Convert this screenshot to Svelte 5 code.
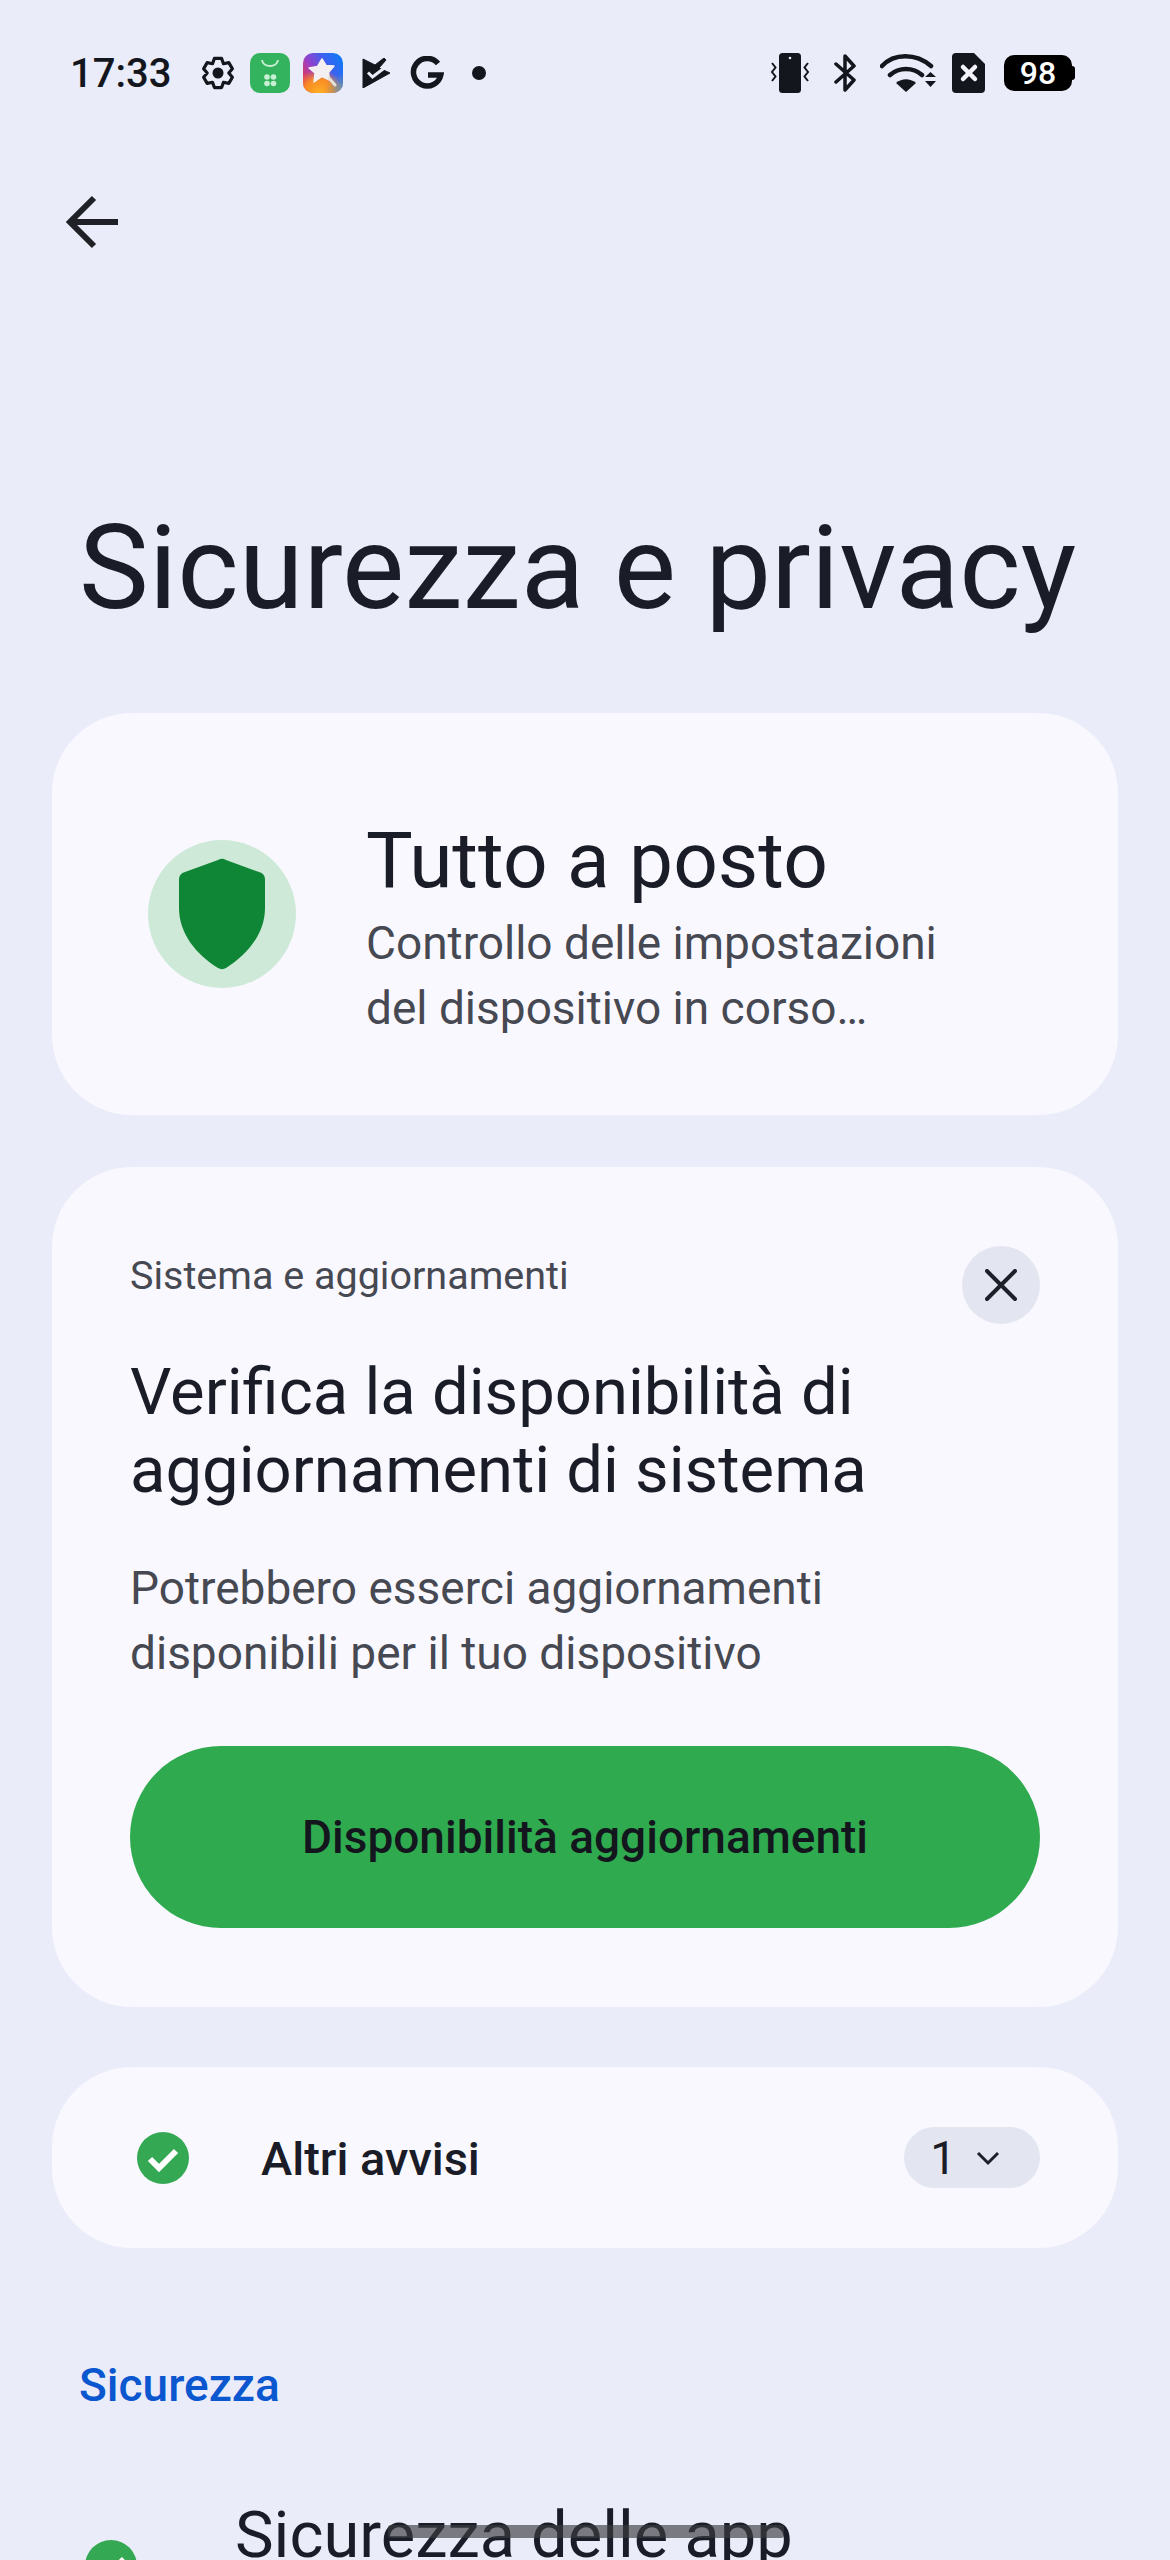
<script>
	const lines = ['Potrebbero esserci aggiornamenti', 'disponibili per il tuo dispositivo'];

	// six rounded teeth round the settings icon
	function gearPath() {
		let d = '';
		for (let i = 0; i < 6; i++) {
			const a = (i * Math.PI) / 3 - Math.PI / 2;
			const pts = [
				[10.8, a - 0.52],
				[15, a - 0.24],
				[15, a + 0.24],
				[10.8, a + 0.52]
			];
			for (const [r, t] of pts) {
				d += (d ? 'L' : 'M') + (17 + r * Math.cos(t)).toFixed(1) + ' ' + (17 + r * Math.sin(t)).toFixed(1);
			}
		}
		return d + 'Z';
	}
</script>

<div class="page">
	<div class="status">
		<span class="time">17:33</span>
		<div class="left-icons">
			<svg class="gear" width="34" height="34" viewBox="0 0 34 34">
				<path d={gearPath()} fill="none" stroke="#14161e" stroke-width="3.2" stroke-linejoin="round" />
				<circle cx="17" cy="17" r="5.5" fill="#14161e" />
			</svg>
			<svg class="store" width="40" height="40" viewBox="0 0 40 40">
				<rect width="40" height="40" rx="10" fill="#33b35d" />
				<path d="M12 7c1 8 15 8 16 0" fill="none" stroke="#c9f0d4" stroke-width="2" />
				<g fill="#c9f0d4">
					<circle cx="17" cy="24" r="2.800" />
					<circle cx="23.500" cy="24" r="2.800" />
					<circle cx="17" cy="30.500" r="2.800" />
					<circle cx="23.500" cy="30.500" r="2.800" />
				</g>
			</svg>
			<svg class="star" width="40" height="40" viewBox="0 0 40 40">
				<defs>
					<linearGradient id="star-bg" x1="0" y1="0.7" x2="1" y2="0.1">
						<stop offset="0" stop-color="#e83a4a" />
						<stop offset="0.3" stop-color="#9a3fc8" />
						<stop offset="0.65" stop-color="#3a62f0" />
						<stop offset="1" stop-color="#0a7cf8" />
					</linearGradient>
					<radialGradient id="star-warm" cx="0.4" cy="1" r="0.6">
						<stop offset="0" stop-color="#fbb024" />
						<stop offset="0.6" stop-color="#f98a26" />
						<stop offset="1" stop-color="#f98a26" stop-opacity="0" />
					</radialGradient>
					<radialGradient id="star-cool" cx="1" cy="0.95" r="0.45">
						<stop offset="0" stop-color="#7f9e92" />
						<stop offset="1" stop-color="#7f9e92" stop-opacity="0" />
					</radialGradient>
				</defs>
				<rect width="40" height="40" rx="10" fill="url(#star-bg)" />
				<rect width="40" height="40" rx="10" fill="url(#star-warm)" />
				<rect width="40" height="40" rx="10" fill="url(#star-cool)" />
				<path d="M19 6 23 12.500 31 13 25.500 19.500 26.500 27 19 23.500 11 29 12 20 6 15 14.500 13.500z" fill="#f4f0f2" stroke="#f4f0f2" stroke-width="1.500" stroke-linejoin="round" />
				<path d="M26 25l6 7" stroke="#e4e2da" stroke-width="3" stroke-linecap="round" />
			</svg>
			<svg class="tick" width="28" height="30" viewBox="0 0 28 30">
				<path d="M1 1 13 7 22 0 24 2 17 10 28 15 1 30z" fill="#14161e" stroke="#14161e" stroke-width="1" stroke-linejoin="round" />
				<path d="M6 14.500 10.500 19 23 9.500" fill="none" stroke="#eaecf9" stroke-width="3" />
			</svg>
			<svg class="g" width="34" height="34" viewBox="0 0 34 34">
				<path d="M28 7.500A13.800 13.800 0 1 0 30.800 19H18" fill="none" stroke="#14161e" stroke-width="5.500" />
			</svg>
			<span class="dot"></span>
		</div>
		<div class="right-icons">
			<svg width="40" height="40" viewBox="0 0 40 40">
				<rect x="9" y="0" width="22" height="40" rx="3.500" fill="#14161e" />
				<circle cx="20" cy="5" r="1.300" fill="#eaecf9" />
				<path d="M2 10l3.500 4.500L2 19l3.500 4.500L2 28M38 10l-3.500 4.500L38 19l-3.500 4.500L38 28" fill="none" stroke="#14161e" stroke-width="2" />
			</svg>
			<svg width="22" height="40" viewBox="0 0 22 40">
				<path d="M2 11 20 27 11 37V3l9 10L2 29" fill="none" stroke="#14161e" stroke-width="3.500" stroke-linejoin="round" stroke-linecap="round" />
			</svg>
			<svg class="wifi" width="56" height="40" viewBox="0 0 56 40">
				<path d="M2 13C14 0 36 0 51 13M10 22c9-8 23-8 32 0" fill="none" stroke="#14161e" stroke-width="4.500" stroke-linecap="round" />
				<path d="M16 30c6-5 14-5 20 0l-10 9z" fill="#14161e" />
				<path d="M45 24l5.500-5 5.500 5zM45 28h11l-5.500 6z" fill="#14161e" />
			</svg>
			<svg class="sim" width="33" height="40" viewBox="0 0 33 40">
				<path d="M4 0H22L33 11V36a4 4 0 0 1-4 4H4a4 4 0 0 1-4-4V4a4 4 0 0 1 4-4z" fill="#14161e" />
				<path d="M11 14 23 26M23 14 11 26" stroke="#f4f5fc" stroke-width="4.500" stroke-linecap="round" />
			</svg>
			<div class="battery"><span>98</span></div>
		</div>
	</div>

	<button class="back" aria-label="Indietro">
		<svg width="54" height="54" viewBox="0 0 54 54">
			<path d="M52 27H5M28 3 4 27l24 24" fill="none" stroke="#1f2127" stroke-width="6" />
		</svg>
	</button>

	<h1>Sicurezza e privacy</h1>

	<section class="card summary">
		<div class="shield-wrap">
			<svg width="88" height="112" viewBox="0 0 88 112">
				<path d="M40 2a8 8 0 0 1 8 0L81 14a8 8 0 0 1 6 8V50c0 26-18 47-39 60a8 8 0 0 1-8 0C19 97 1 76 1 50V22a8 8 0 0 1 6-8z" fill="#0f8636" />
			</svg>
		</div>
		<div class="summary-text">
			<h2>Tutto a posto</h2>
			<p>Controllo delle impostazioni<br />del dispositivo in corso…</p>
		</div>
	</section>

	<section class="card update">
		<div class="update-head">
			<span class="eyebrow">Sistema e aggiornamenti</span>
			<button class="close" aria-label="Chiudi">
				<svg width="32" height="32" viewBox="0 0 32 32">
					<path d="M2 2 30 30M30 2 2 30" stroke="#1d1f29" stroke-width="4" stroke-linecap="round" />
				</svg>
			</button>
		</div>
		<h3>Verifica la disponibilità di<br />aggiornamenti di sistema</h3>
		<p>
			{#each lines as line}
				<span class="line">{line}</span>
			{/each}
		</p>
		<button class="cta">Disponibilità aggiornamenti</button>
	</section>

	<section class="card alerts">
		<svg class="check" width="52" height="52" viewBox="0 0 52 52">
			<circle cx="26" cy="26" r="26" fill="#34a853" />
			<path d="M13 27l9 9 17-17" fill="none" stroke="#fff" stroke-width="6" />
		</svg>
		<span class="alerts-label">Altri avvisi</span>
		<div class="pill">
			<span>1</span>
			<svg width="24" height="16" viewBox="0 0 24 16">
				<path d="M2 3l10 10L22 3" fill="none" stroke="#1d1f29" stroke-width="3" />
			</svg>
		</div>
	</section>

	<div class="section-title">Sicurezza</div>

	<div class="row">
		<svg class="row-check" width="52" height="52" viewBox="0 0 52 52">
			<circle cx="26" cy="26" r="26" fill="#34a853" />
			<path d="M13 27l9 9 17-17" fill="none" stroke="#fff" stroke-width="6" />
		</svg>
		<span class="row-title">Sicurezza delle app</span>
	</div>

	<div class="home-bar"></div>
</div>

<style>
	:global(body) {
		margin: 0;
		background: #eaecf9;
	}

	.page {
		position: relative;
		width: 1170px;
		height: 2560px;
		overflow: hidden;
		background: #eaecf9;
		font-family: Roboto, sans-serif;
		color: #1a1c27;
	}

	.status {
		display: flex;
		align-items: center;
		height: 40px;
		padding: 53px 98px 0 70px;
	}

	.time {
		font-size: 40px;
		font-weight: 500;
		margin-right: 30px;
		color: #14161e;
	}

	.left-icons {
		display: flex;
		align-items: center;
	}

	.store {
		margin-left: 15px;
	}

	.star {
		margin-left: 13px;
	}

	.tick {
		margin-left: 19px;
	}

	.g {
		margin-left: 20px;
	}

	.dot {
		width: 14px;
		height: 14px;
		margin-left: 28px;
		border-radius: 50%;
		background: #14161e;
	}

	.right-icons {
		display: flex;
		align-items: center;
		gap: 24px;
		margin-left: auto;
	}

	.sim {
		margin-left: -8px;
	}

	.battery {
		position: relative;
		width: 68px;
		height: 36px;
		margin-left: -5px;
		border-radius: 10px;
		background: #000;
		color: #fff;
		font-size: 32px;
		font-weight: 500;
		line-height: 37px;
		text-align: center;
	}

	.battery::after {
		content: '';
		position: absolute;
		right: -3px;
		top: 11px;
		width: 3px;
		height: 14px;
		border-radius: 0 3px 3px 0;
		background: #000;
	}

	button {
		border: 0;
		padding: 0;
		font-family: inherit;
	}

	.back {
		display: block;
		margin: 102px 0 0 66px;
		background: none;
	}

	h1 {
		margin: 248px 0 0 79px;
		font-size: 117.4px;
		font-weight: 400;
		line-height: 136px;
		white-space: nowrap;
	}

	.card {
		margin: 0 52px;
		background: #f9f8fe;
		border-radius: 80px;
	}

	.summary {
		display: flex;
		align-items: center;
		height: 402px;
		margin-top: 77px;
		box-sizing: border-box;
		padding-left: 96px;
	}

	.shield-wrap {
		display: flex;
		align-items: center;
		justify-content: center;
		width: 148px;
		height: 148px;
		border-radius: 50%;
		background: #cfe9d8;
		flex: none;
	}

	.summary-text {
		margin-left: 70px;
		margin-top: 28px;
	}

	h2 {
		margin: 0 0 6px;
		font-size: 78.4px;
		font-weight: 400;
		line-height: 90px;
	}

	.summary-text p {
		margin: 0;
		font-size: 46px;
		line-height: 65px;
		color: #464852;
	}

	.update {
		height: 840px;
		margin-top: 52px;
		box-sizing: border-box;
		padding: 79px 78px 0;
	}

	.update-head {
		position: relative;
		height: 78px;
	}

	.eyebrow {
		display: block;
		padding-top: 7px;
		font-size: 39.5px;
		line-height: 46px;
		color: #464852;
	}

	.close {
		position: absolute;
		top: 0;
		right: 0;
		display: flex;
		align-items: center;
		justify-content: center;
		width: 78px;
		height: 78px;
		border-radius: 50%;
		background: #e3e5f0;
	}

	h3 {
		margin: 29px 0 0;
		font-size: 65.2px;
		font-weight: 400;
		line-height: 78px;
	}

	.update p {
		margin: 47px 0 0;
		font-size: 46px;
		line-height: 65px;
		color: #464852;
	}

	.line {
		display: block;
	}

	.cta {
		display: block;
		width: 100%;
		height: 182px;
		margin-top: 60px;
		border-radius: 91px;
		background: #2faa4f;
		color: #14161e;
		font-size: 46px;
		font-weight: 500;
	}

	.alerts {
		display: flex;
		align-items: center;
		height: 181px;
		margin-top: 60px;
		box-sizing: border-box;
		padding: 0 78px 0 85px;
	}

	.alerts-label {
		margin-left: 72px;
		padding-top: 2px;
		font-size: 47px;
		font-weight: 500;
	}

	.pill {
		display: flex;
		align-items: center;
		gap: 20px;
		height: 61px;
		margin-left: auto;
		padding: 0 40px 0 26px;
		border-radius: 31px;
		background: #e3e5f0;
		font-size: 46px;
	}

	.section-title {
		margin: 111px 0 0 79px;
		font-size: 46px;
		font-weight: 500;
		line-height: 52px;
		color: #0b57cf;
	}

	.row {
		display: flex;
		align-items: flex-start;
		margin-top: 85px;
		padding-left: 85px;
	}

	.row-check {
		margin-top: 44px;
		flex: none;
	}

	.row-title {
		margin-left: 98px;
		font-size: 65px;
		line-height: 78px;
	}

	.home-bar {
		position: absolute;
		left: 388px;
		bottom: 22px;
		width: 396px;
		height: 13px;
		border-radius: 3px;
		background: rgba(60, 60, 65, 0.65);
	}
</style>
